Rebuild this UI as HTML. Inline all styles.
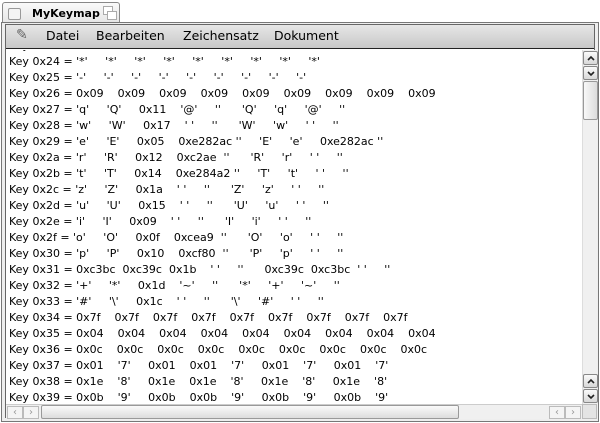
<!DOCTYPE html>
<html><head><style>
*{margin:0;padding:0;box-sizing:border-box}
body{width:600px;height:423px;background:#fff;position:relative;overflow:hidden;font-family:"DejaVu Sans","Liberation Sans",sans-serif;font-size:11px;color:#000}
.tab{position:absolute;left:2px;top:2px;width:118px;height:22px;border:1px solid #888;border-bottom:none;border-radius:3px 3px 0 0;background:linear-gradient(#fafafa,#e4e4e4)}
.tab .b1{position:absolute;left:5px;top:5px;width:13px;height:12px;border:1px solid #999;border-radius:2px;background:#f4f4f4}
.tab .t{position:absolute;left:29px;top:4px;font-weight:bold;font-size:11px}
.tab .b2{position:absolute;left:100px;top:3px;width:10px;height:9px;border:1px solid #aaa;background:#fff}
.tab .b3{position:absolute;left:104px;top:8px;width:10px;height:9px;border:1px solid #aaa;background:#fff}
.frame{position:absolute;left:1px;top:22px;width:598px;height:400px;border:1px solid #777;background:#eee}
.inner{position:absolute;left:3px;top:1px;right:3px;bottom:3px;border:1px solid #666;background:#fff}
.menu{position:absolute;left:0;top:0;right:0;height:24px;background:linear-gradient(#e6e6e6,#c8c8c8);border-bottom:1px solid #222;font-size:12.5px}
.menu span{position:absolute;top:3px}
.content{position:absolute;left:0;top:25px;width:576px;height:354px;overflow:hidden}
pre{position:absolute;left:3px;top:-12px;font-family:"DejaVu Sans","Liberation Sans",sans-serif;font-size:11px;line-height:16px;white-space:pre}
.vs{position:absolute;left:576px;top:25px;width:15px;height:354px;background:#f0f0f0;border-left:1px solid #ddd}
.btn{position:absolute;left:0;width:15px;height:14px;border:1px solid #888;border-radius:2px;background:linear-gradient(#fafafa,#d8d8d8)}
.btn svg{position:absolute;left:3px;top:3px}
.thumb{position:absolute;left:0;top:31px;width:15px;height:39px;border:1px solid #999;border-radius:2px;background:linear-gradient(90deg,#f8f8f8,#dcdcdc)}
.hs{position:absolute;left:0;top:379px;width:576px;height:15px;background:#f0f0f0;border-top:1px solid #ccc}
.hb{position:absolute;top:1px;width:16px;height:13px;border:1px solid #bbb;background:#f4f4f4;color:#999;font-size:10px;text-align:center;line-height:11px}
.hthumb{position:absolute;left:35px;top:0;width:418px;height:14px;border:1px solid #999;border-radius:2px;background:linear-gradient(#fafafa,#dcdcdc)}
.corner{position:absolute;left:576px;top:379px;width:15px;height:15px;background:#e4e4e4;border:1px solid #bbb}
</style></head><body>
<div class="tab"><div class="b1"></div><div class="t">MyKeymap</div><div class="b2"></div><div class="b3"></div></div>
<div class="frame"><div class="inner">
<div class="menu">
<span style="left:10px;top:2px;font-size:14px;color:#666">✎</span>
<span style="left:40px">Datei</span><span style="left:90px">Bearbeiten</span><span style="left:177px">Zeichensatz</span><span style="left:268px">Dokument</span>
</div>
<div class="content"><pre>Key 0x23 = '#'     '#'     '#'     '#'     '#'     '#'     '#'     '#'     '#'
Key 0x24 = '*'     '*'     '*'     '*'     '*'     '*'     '*'     '*'     '*'
Key 0x25 = '-'     '-'     '-'     '-'     '-'     '-'     '-'     '-'     '-'
Key 0x26 = 0x09    0x09    0x09    0x09    0x09    0x09    0x09    0x09    0x09
Key 0x27 = 'q'     'Q'     0x11    '@'     ''      'Q'     'q'     '@'     ''
Key 0x28 = 'w'     'W'     0x17    ' '     ''      'W'     'w'     ' '     ''
Key 0x29 = 'e'     'E'     0x05    0xe282ac ''     'E'     'e'     0xe282ac ''
Key 0x2a = 'r'     'R'     0x12    0xc2ae  ''      'R'     'r'     ' '     ''
Key 0x2b = 't'     'T'     0x14    0xe284a2 ''     'T'     't'     ' '     ''
Key 0x2c = 'z'     'Z'     0x1a    ' '     ''      'Z'     'z'     ' '     ''
Key 0x2d = 'u'     'U'     0x15    ' '     ''      'U'     'u'     ' '     ''
Key 0x2e = 'i'     'I'     0x09    ' '     ''      'I'     'i'     ' '     ''
Key 0x2f = 'o'     'O'     0x0f    0xcea9  ''      'O'     'o'     ' '     ''
Key 0x30 = 'p'     'P'     0x10    0xcf80  ''      'P'     'p'     ' '     ''
Key 0x31 = 0xc3bc  0xc39c  0x1b    ' '     ''      0xc39c  0xc3bc  ' '     ''
Key 0x32 = '+'     '*'     0x1d    '~'     ''      '*'     '+'     '~'     ''
Key 0x33 = '#'     '\'     0x1c    ' '     ''      '\'     '#'     ' '     ''
Key 0x34 = 0x7f    0x7f    0x7f    0x7f    0x7f    0x7f    0x7f    0x7f    0x7f
Key 0x35 = 0x04    0x04    0x04    0x04    0x04    0x04    0x04    0x04    0x04
Key 0x36 = 0x0c    0x0c    0x0c    0x0c    0x0c    0x0c    0x0c    0x0c    0x0c
Key 0x37 = 0x01    '7'     0x01    0x01    '7'     0x01    '7'     0x01    '7'
Key 0x38 = 0x1e    '8'     0x1e    0x1e    '8'     0x1e    '8'     0x1e    '8'
Key 0x39 = 0x0b    '9'     0x0b    0x0b    '9'     0x0b    '9'     0x0b    '9'</pre></div>
<div class="vs">
<div class="btn" style="top:1px"><svg width="8" height="7"><path d="M1 5L4 2L7 5" stroke="#222" stroke-width="1.6" fill="none"/></svg></div>
<div class="btn" style="top:16px"><svg width="8" height="7"><path d="M1 2L4 5L7 2" stroke="#222" stroke-width="1.6" fill="none"/></svg></div>
<div class="thumb"></div>
<div class="btn" style="top:324px"><svg width="8" height="7"><path d="M1 5L4 2L7 5" stroke="#222" stroke-width="1.6" fill="none"/></svg></div>
<div class="btn" style="top:339px"><svg width="8" height="7"><path d="M1 2L4 5L7 2" stroke="#222" stroke-width="1.6" fill="none"/></svg></div>
</div>
<div class="hs">
<div class="hb" style="left:1px">‹</div><div class="hb" style="left:17px">›</div>
<div class="hthumb"></div>
<div class="hb" style="left:543px">‹</div><div class="hb" style="left:559px">›</div>
</div>
<div class="corner"></div>
</div></div>
</body></html>
